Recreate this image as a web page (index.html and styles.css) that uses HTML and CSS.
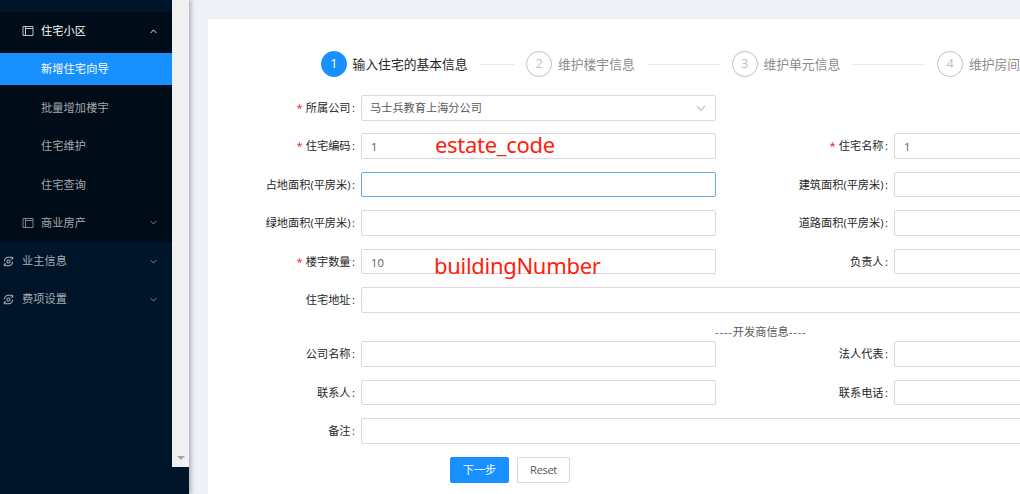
FILE: index.html
```html
<!DOCTYPE html>
<html lang="zh-CN">
<head>
<meta charset="utf-8">
<title>新增住宅向导</title>
<link rel="stylesheet" href="styles.css">
</head>
<body>
<svg class="defs" aria-hidden="true">
  <symbol id="layout" viewBox="0 0 12 12"><path d="M1 1.500h10v9H1zM3.500 1.500v9M3.500 3.500H11" fill="none" stroke="currentColor" stroke-width="1"/></symbol>
  <symbol id="down" viewBox="0 0 10 10"><path d="M1 2.8l4 4.5 4-4.5" fill="none" stroke="currentColor" stroke-width="1.2"/></symbol>
  <symbol id="sync" viewBox="0 0 12 12"><g fill="none" stroke="currentColor" stroke-width="1.1"><path d="M1.600 5.800C1.500 3 3.500 1.300 6 1.300h4.200M8.300 3.200h2.300V1M10.400 6.200C10.500 9 8.500 10.700 6 10.700H1.800M3.700 8.800H1.400V11"/><circle cx="6" cy="6" r="1.700"/></g></symbol>
</svg>
<div class="app">
  <aside class="sidebar">
    <nav class="menu">
      <div class="submenu">
        <div class="row parent open"><svg class="icon"><use href="#layout"/></svg><span>住宅小区</span><svg class="arrow up"><use href="#down"/></svg></div>
        <div class="row item selected"><span>新增住宅向导</span></div>
        <div class="row item"><span>批量增加楼宇</span></div>
        <div class="row item"><span>住宅维护</span></div>
        <div class="row item"><span>住宅查询</span></div>
        <div class="row parent"><svg class="icon"><use href="#layout"/></svg><span>商业房产</span><svg class="arrow"><use href="#down"/></svg></div>
      </div>
      <div class="row top"><svg class="icon small"><use href="#sync"/></svg><span>业主信息</span><svg class="arrow"><use href="#down"/></svg></div>
      <div class="row top"><svg class="icon small"><use href="#sync"/></svg><span>费项设置</span><svg class="arrow"><use href="#down"/></svg></div>
    </nav>
    <div class="scrollbar"><svg viewBox="0 0 8 4"><path d="M0 0h8L4 4z" fill="#a3a3a3"/></svg></div>
  </aside>
  <main class="content">
    <section class="card">
      <div class="steps">
        <div class="step active"><span class="num">1</span><span class="title">输入住宅的基本信息</span><i></i></div>
        <div class="step"><span class="num">2</span><span class="title">维护楼宇信息</span><i></i></div>
        <div class="step"><span class="num">3</span><span class="title">维护单元信息</span><i></i></div>
        <div class="step"><span class="num">4</span><span class="title">维护房间</span></div>
      </div>
      <form class="form">
        <div class="line"><label class="required">所属公司</label><div class="field select">马士兵教育上海分公司<svg><use href="#down"/></svg></div></div>
        <div class="line"><label class="required">住宅编码</label><div class="field">1<b class="note code">estate_code</b></div><label class="required">住宅名称</label><div class="field">1</div></div>
        <div class="line"><label>占地面积(平房米)</label><div class="field focus"></div><label>建筑面积(平房米)</label><div class="field"></div></div>
        <div class="line"><label>绿地面积(平房米)</label><div class="field"></div><label>道路面积(平房米)</label><div class="field"></div></div>
        <div class="line"><label class="required">楼宇数量</label><div class="field">10<b class="note building">buildingNumber</b></div><label>负责人</label><div class="field"></div></div>
        <div class="line"><label>住宅地址</label><div class="field wide"></div></div>
        <div class="divider"><span>----</span>开发商信息<span>----</span></div>
        <div class="line"><label>公司名称</label><div class="field"></div><label>法人代表</label><div class="field"></div></div>
        <div class="line"><label>联系人</label><div class="field"></div><label>联系电话</label><div class="field"></div></div>
        <div class="line"><label>备注</label><div class="field wide"></div></div>
        <div class="actions"><button type="button" class="primary">下一步</button><button type="button" class="reset">Reset</button></div>
      </form>
    </section>
  </main>
</div>
</body>
</html>
```
FILE: styles.css
```css
* { box-sizing: border-box; }
body { margin: 0; overflow: hidden; font: 11.2px/1.5 "Open Sans", "Noto Sans CJK SC", sans-serif; color: #595959; }
.defs { position: absolute; width: 0; height: 0; }
.app { display: flex; width: 1020px; height: 494px; overflow: hidden; background: #eff1f6; }
.sidebar { position: relative; z-index: 1; display: flex; flex: none; align-items: flex-start; width: 189px; height: 494px; background: #001529; box-shadow: 1.6px 0 5px rgba(0, 21, 41, .35); }
.menu { width: 172px; padding-top: 12px; }
.scrollbar { display: flex; align-items: flex-end; justify-content: center; width: 17px; height: 467px; padding-bottom: 7px; background: #f0f0f0; }
.scrollbar svg { width: 8px; height: 4px; }
.submenu { height: 230px; padding-top: 3px; background: #000c17; }
.row { display: flex; align-items: center; height: 32px; margin-bottom: 6.4px; padding-right: 15px; color: #a6adb4; white-space: nowrap; }
.row span { padding-top: 1px; letter-spacing: .1px; }
.submenu .row { color: #a5a9ad; }
.parent { padding-left: 22px; }
.menu .open { color: #fff; }
.item { padding-left: 41px; }
.menu .selected { color: #fff; background: #1890ff; }
.icon { width: 12px; height: 12px; margin-right: 7px; opacity: .75; }
.top { padding-left: 3px; }
.submenu + .top { margin-top: 3px; }
.icon.small { width: 11px; height: 11px; margin-right: 8px; opacity: 1; }
.arrow { width: 7px; height: 7px; margin-left: auto; opacity: .8; }
.arrow.up { transform: rotate(180deg); opacity: 1; }
.content { flex: none; width: 831px; padding: 19px 0 0 19px; }
.card { width: 1100px; height: 475px; padding-top: 32px; background: #fff; }
.steps { display: flex; gap: 12.4px; height: 26px; padding-left: 113px; }
.step { display: flex; flex: none; align-items: center; width: 193.1px; color: #8c8c8c; font-size: 12.8px; white-space: nowrap; }
.num { display: flex; align-items: center; justify-content: center; width: 25.6px; height: 25.6px; margin-right: 5.9px; border: 1px solid #bfbfbf; border-radius: 50%; color: #bfbfbf; }
.title { padding-top: 1px; }
.step i { flex: 1; height: 1px; margin-left: 12.8px; background: #e8e8e8; }
.active { color: #262626; }
.active .num { border-color: #1890ff; background: #1890ff; color: #fff; }
.form { padding-top: 18px; }
.line { display: grid; grid-template-columns: 153px 355px 178px 355px; align-items: center; height: 25.6px; margin-bottom: 12.8px; }
label { padding: 1.4px 6px 0 0; text-align: right; color: #262626; white-space: nowrap; }
label::after { content: ":"; margin-left: 1.5px; }
.required::before { content: "*"; margin-right: 3px; color: #f5222d; }
.field { position: relative; height: 25.6px; padding: 0 9px; border: 1px solid #d9d9d9; border-radius: 2px; line-height: 25px; }
.field.focus { border-color: #5dacf0; }
.wide { grid-column: 2 / 5; }
.select { display: flex; align-items: center; justify-content: space-between; padding-left: 8px; }
.select svg { width: 10px; height: 10px; color: #bfbfbf; }
.note { position: absolute; color: #ff1d0d; font: 22px/30px "Noto Sans", sans-serif; letter-spacing: -.3px; }
.code { top: -5px; left: 73px; }
.building { top: 0; left: 72px; }
.divider { height: 15.9px; padding-left: 507px; line-height: 13px; }
.divider span { letter-spacing: .85px; }
.actions { display: flex; gap: 8px; padding: .5px 0 0 242px; }
button { width: 53px; height: 25.6px; padding: 1px 0 0; border: 1px solid #d9d9d9; border-radius: 2px; background: #fff; color: #595959; font: inherit; }
.reset { letter-spacing: -.4px; }
.primary { width: 59px; border-color: #1890ff; background: #1890ff; color: #fff; }
```
